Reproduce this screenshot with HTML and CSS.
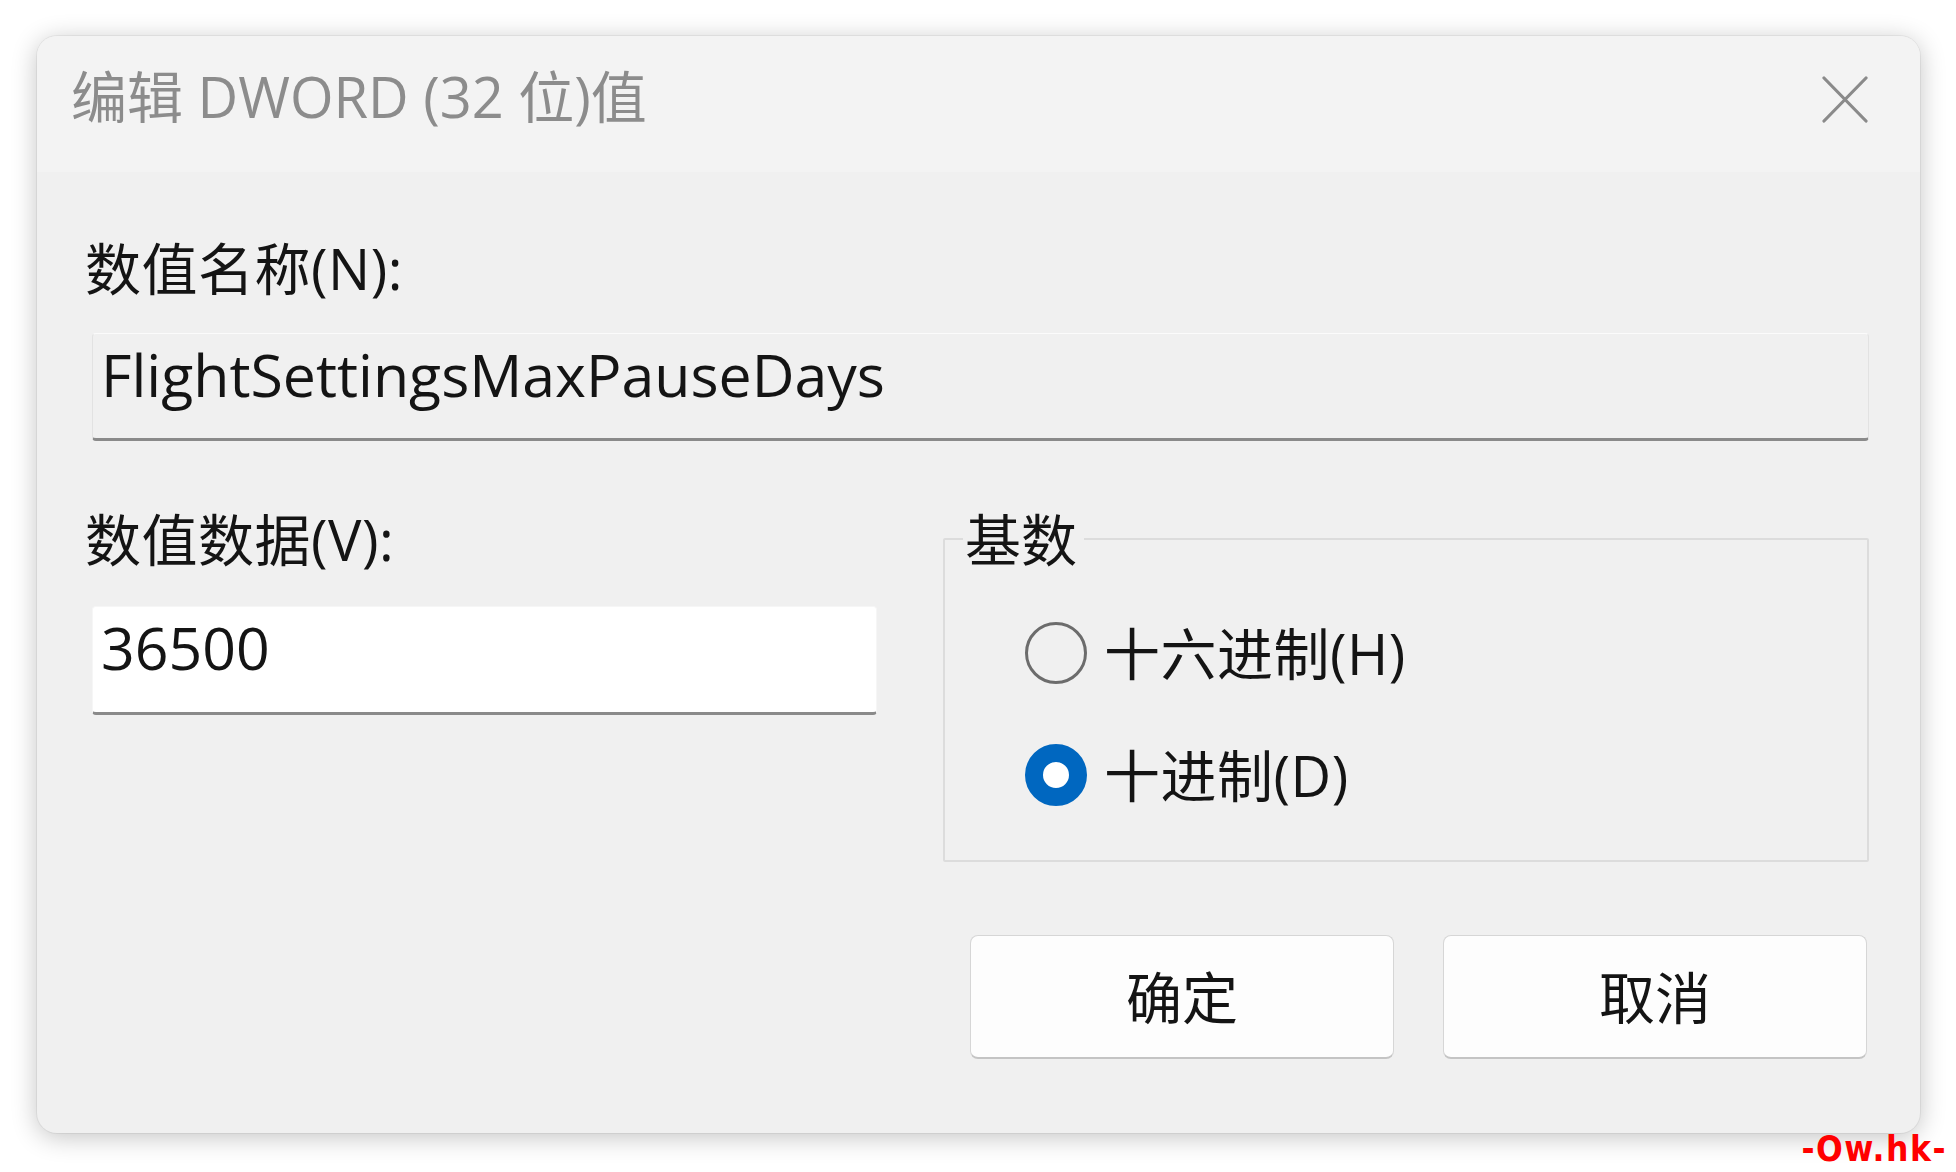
FILE: index.html
```
<!DOCTYPE html>
<html lang="zh-CN">
<head>
<meta charset="utf-8">
<title>编辑 DWORD (32 位)值</title>
<link rel="stylesheet" href="styles.css">
</head>
<body>
<div class="dialog">
  <div class="titlebar">
    <span class="title">编辑 DWORD (32 位)值</span>
    <svg class="close" viewBox="0 0 46 47" aria-label="关闭"><path d="M2 2 L44 45 M44 2 L2 45" stroke="#8a8a8a" stroke-width="3.2" stroke-linecap="round" fill="none"/></svg>
  </div>
  <div class="content">
    <div class="label">数值名称(N):</div>
    <div class="field readonly">FlightSettingsMaxPauseDays</div>
    <div class="row">
      <div class="col">
        <div class="label">数值数据(V):</div>
        <div class="field edit">36500</div>
      </div>
      <fieldset class="group">
        <legend class="legend">基数</legend>
        <div class="radios">
          <div class="radio"><span class="dot"></span><span class="rtext">十六进制(H)</span></div>
          <div class="radio second"><span class="dot checked"></span><span class="rtext">十进制(D)</span></div>
        </div>
      </fieldset>
    </div>
    <div class="buttons">
      <button class="btn">确定</button>
      <button class="btn">取消</button>
    </div>
  </div>
</div>
<div class="watermark">-Ow.hk-</div>
</body>
</html>
```
FILE: styles.css
```
html, body {
  margin: 0;
}
body {
  width: 1956px;
  height: 1172px;
  box-sizing: border-box;
  padding: 36px 0 0 37px;
  background: #ffffff;
  position: relative;
  overflow: hidden;
  font-family: "Open Sans", "Noto Sans CJK SC", sans-serif;
  color: #141414;
}
.dialog {
  width: 1883px;
  height: 1097px;
  background: #f0f0f0;
  border-radius: 20px;
  box-shadow: 0 4px 26px rgba(0, 0, 0, 0.24), 0 0 0 1px rgba(0, 0, 0, 0.05);
  overflow: hidden;
  display: flex;
  flex-direction: column;
}
.titlebar {
  height: 136px;
  box-sizing: border-box;
  background: #f3f3f3;
  display: flex;
  align-items: flex-start;
  padding: 28px 52px 0 34px;
}
.title {
  font-size: 56px;
  line-height: 64px;
  color: #8c8c8c;
  white-space: nowrap;
}
.close {
  margin-left: auto;
  margin-top: 12px;
  width: 46px;
  height: 47px;
}
.content {
  display: flex;
  flex-direction: column;
  padding: 64px 51px 0 48px;
}
.label {
  font-size: 56px;
  line-height: 64px;
  height: 64px;
  white-space: nowrap;
  letter-spacing: 0.5px;
}
.field {
  margin: 33px 0 0 7px;
  height: 108px;
  box-sizing: border-box;
  border: 1px solid #e2e2e2;
  border-bottom: 3px solid #8a8a8a;
  border-radius: 4px;
  padding: 6px 0 0 8px;
  font-size: 59px;
  line-height: 68px;
  white-space: nowrap;
}
.readonly {
  background: #f0f0f0;
  border-top-color: #fbfbfb;
}
.edit {
  background: #ffffff;
  width: 785px;
  height: 109px;
  margin-top: 35px;
  border-color: #f6f6f6;
  border-bottom-color: #8a8a8a;
}
.row {
  display: flex;
  gap: 66px;
  margin-top: 66px;
}
.col {
  display: flex;
  flex-direction: column;
}
.group {
  flex: 1;
  margin: 0;
  padding: 0;
  min-width: 0;
  border: 2px solid #dcdcdc;
  border-radius: 2px;
}
.legend {
  margin-left: 18px;
  padding: 0 7px 0 2px;
  font-size: 56px;
  line-height: 64px;
}
.radios {
  padding: 50px 0 53px 80px;
}
.radio {
  display: flex;
  align-items: center;
  height: 64px;
  gap: 17px;
}
.second {
  margin-top: 58px;
}
.dot {
  width: 62px;
  height: 62px;
  box-sizing: border-box;
  border: 3px solid #6c6c6c;
  border-radius: 50%;
  flex: none;
}
.checked {
  border: 18px solid #0067c0;
  background: #ffffff;
}
.rtext {
  font-size: 56px;
  line-height: 64px;
  white-space: nowrap;
  letter-spacing: 0.5px;
}
.buttons {
  display: flex;
  justify-content: flex-end;
  gap: 49px;
  margin-top: 73px;
  padding-right: 2px;
}
.btn {
  width: 424px;
  height: 124px;
  padding: 0;
  background: #fdfdfd;
  border: 1px solid #d6d6d6;
  border-bottom: 2px solid #c4c4c4;
  border-radius: 8px;
  font-family: "Open Sans", "Noto Sans CJK SC", sans-serif;
  font-size: 56px;
  line-height: 64px;
  color: #141414;
}
.watermark {
  position: absolute;
  right: 9px;
  top: 1133px;
  font-family: "DejaVu Sans Condensed", "DejaVu Sans", sans-serif;
  font-weight: bold;
  font-size: 35px;
  line-height: 33px;
  letter-spacing: 1.5px;
  color: #ff0000;
}
```
